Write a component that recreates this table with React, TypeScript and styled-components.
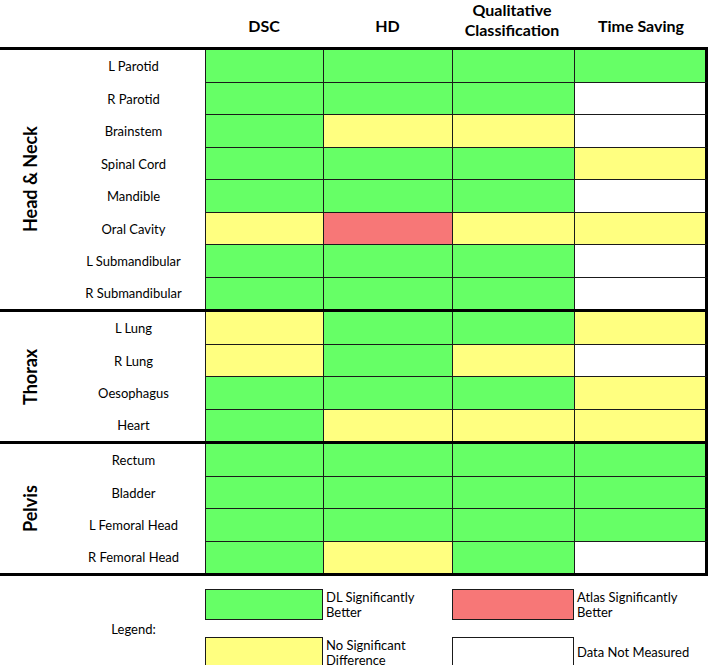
import {FC} from 'react'
import styled, {createGlobalStyle} from 'styled-components'

const GlobalStyle = createGlobalStyle`
  html, body {
    margin: 0;
    padding: 0;
    background: #ffffff;
    overflow: hidden;
  }
  * {
    box-sizing: border-box;
  }
  body {
    font-family: Lato, "Open Sans", "Liberation Sans", sans-serif;
    color: #000000;
  }
`

type Mark = 'G' | 'Y' | 'R' | 'W'

const colors: Record<Mark, string> = {
  G: '#66ff66',
  Y: '#ffff80',
  R: '#f77777',
  W: '#ffffff',
}

const columns = '205px 118px 129px 122px 134px'

const Page = styled.div`
  width: 708px;
`

const Header = styled.div`
  height: 47px;
  display: grid;
  grid-template-columns: ${columns};
`

const HeaderCell = styled.div<{$raise?: boolean}>`
  display: flex;
  align-items: center;
  justify-content: center;
  text-align: center;
  font-weight: 700;
  font-size: 16px;
  line-height: 20px;
  padding-bottom: ${p => (p.$raise ? '11px' : '0')};
  padding-right: ${p => (p.$raise ? '2px' : '0')};
`

const Table = styled.div`
  border-top: 3px solid #000;
`

const Group = styled.div`
  display: flex;
  border-bottom: 3px solid #000;
`

const GroupLabel = styled.div`
  width: 62px;
  flex: 0 0 62px;
  display: flex;
  align-items: center;
  justify-content: center;
  writing-mode: vertical-rl;
  transform: rotate(180deg);
  font-weight: 700;
  font-size: 18px;
  padding-left: 2px;
`

const RowList = styled.div`
  display: flex;
  flex-direction: column;
`

const Row = styled.div`
  display: grid;
  grid-template-columns: 143px 118px 129px 122px 134px;
  height: 32.5px;

  &:last-child {
    height: 31.5px;
  }
`

const RowLabel = styled.div`
  display: flex;
  align-items: center;
  justify-content: center;
  font-size: 13px;
`

const Cell = styled.div<{$mark: Mark}>`
  background: ${p => colors[p.$mark]};
  border-left: 1px solid #1a1a1a;
  border-bottom: 1px solid #1a1a1a;

  ${Row}:last-child & {
    border-bottom: none;
  }

  &:last-child {
    border-right: 3px solid #000;
  }
`

const Legend = styled.div`
  display: grid;
  grid-template-columns: ${columns};
  grid-template-rows: 31px 31px;
  row-gap: 17px;
  padding-top: 13px;
`

const LegendTitle = styled.div`
  grid-row: 1 / 3;
  display: flex;
  align-items: center;
  justify-content: center;
  font-size: 13px;
  padding-left: 62px;
`

const Swatch = styled.div<{$mark: Mark}>`
  background: ${p => colors[p.$mark]};
  border: 1px solid #1a1a1a;
`

const SwatchText = styled.div`
  display: flex;
  align-items: center;
  padding-left: 3px;
  font-size: 13px;
  line-height: 15px;
`

type GroupData = {name: string, rows: [string, string][]}

const groups: GroupData[] = [
  {
    name: 'Head & Neck',
    rows: [
      ['L Parotid', 'GGGG'],
      ['R Parotid', 'GGGW'],
      ['Brainstem', 'GYYW'],
      ['Spinal Cord', 'GGGY'],
      ['Mandible', 'GGGW'],
      ['Oral Cavity', 'YRYY'],
      ['L Submandibular', 'GGGW'],
      ['R Submandibular', 'GGGW'],
    ],
  },
  {
    name: 'Thorax',
    rows: [
      ['L Lung', 'YGGY'],
      ['R Lung', 'YGYW'],
      ['Oesophagus', 'GGGY'],
      ['Heart', 'GYYY'],
    ],
  },
  {
    name: 'Pelvis',
    rows: [
      ['Rectum', 'GGGG'],
      ['Bladder', 'GGGG'],
      ['L Femoral Head', 'GGGG'],
      ['R Femoral Head', 'GYGW'],
    ],
  },
]

const App: FC = () => (
  <Page>
    <GlobalStyle />
    <Header>
      <div />
      <HeaderCell>DSC</HeaderCell>
      <HeaderCell>HD</HeaderCell>
      <HeaderCell $raise>Qualitative<br />Classification</HeaderCell>
      <HeaderCell>Time Saving</HeaderCell>
    </Header>
    <Table>
      {groups.map(group => (
        <Group key={group.name}>
          <GroupLabel>{group.name}</GroupLabel>
          <RowList>
            {group.rows.map(([label, marks]) => (
              <Row key={label}>
                <RowLabel>{label}</RowLabel>
                {marks.split('').map((m, i) => (
                  <Cell key={i} $mark={m as Mark} />
                ))}
              </Row>
            ))}
          </RowList>
        </Group>
      ))}
    </Table>
    <Legend>
      <LegendTitle>Legend:</LegendTitle>
      <Swatch $mark="G" />
      <SwatchText>DL Significantly<br />Better</SwatchText>
      <Swatch $mark="R" />
      <SwatchText>Atlas Significantly<br />Better</SwatchText>
      <Swatch $mark="Y" />
      <SwatchText>No Significant<br />Difference</SwatchText>
      <Swatch $mark="W" />
      <SwatchText>Data Not Measured</SwatchText>
    </Legend>
  </Page>
)

export default App
